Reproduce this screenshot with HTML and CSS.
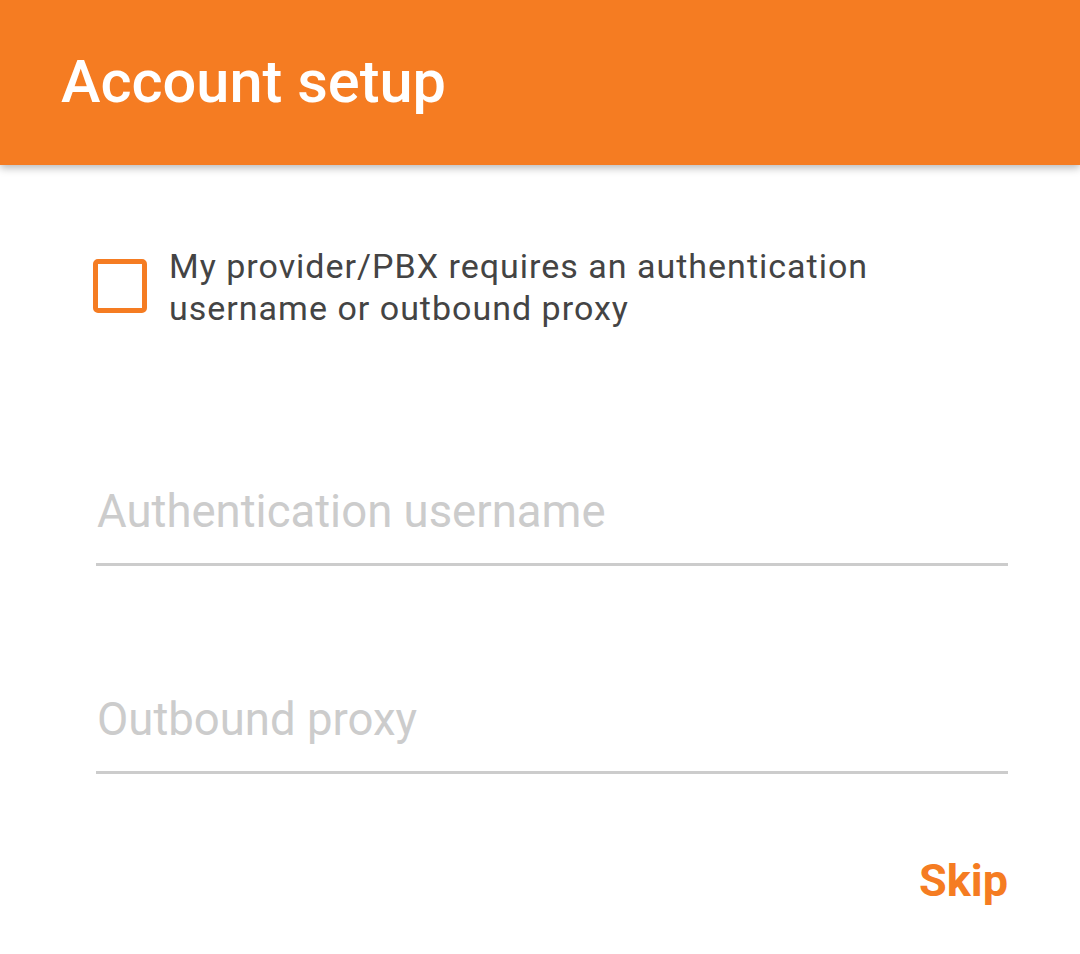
FILE: index.html
```html
<!DOCTYPE html>
<html>
<head>
<meta charset="utf-8">
<link rel="stylesheet" href="styles.css">
</head>
<body>
<header class="appbar"><h1 class="title">Account setup</h1></header>
<main class="content">
  <label class="check-row">
    <span class="checkbox"></span>
    <span class="check-label">My provider/PBX requires an authentication username or outbound proxy</span>
  </label>
  <div class="field field-first"><span class="placeholder">Authentication username</span></div>
  <div class="field field-second"><span class="placeholder">Outbound proxy</span></div>
  <div class="actions"><span class="skip">Skip</span></div>
</main>
</body>
</html>
```
FILE: styles.css
```css
html, body {
  margin: 0;
  padding: 0;
  background: #ffffff;
  font-family: Roboto, "Noto Sans", sans-serif;
}
body {
  width: 1080px;
  height: 954px;
  overflow: hidden;
}
.appbar {
  height: 165px;
  background: #f57c22;
  box-shadow: 0 3px 8px rgba(0,0,0,0.28);
  display: flex;
  align-items: center;
  padding-left: 61px;
  position: relative;
  z-index: 1;
}
.title {
  margin: 0;
  color: #ffffff;
  font-size: 59.5px;
  font-weight: 500;
  line-height: 1;
}
.content {
  padding: 0 72px 0 96px;
  display: flex;
  flex-direction: column;
}
.check-row {
  display: flex;
  align-items: flex-start;
  padding-top: 81px;
  margin-left: -3px;
}
.checkbox {
  flex: none;
  width: 44px;
  height: 44px;
  border: 5px solid #f57c22;
  border-radius: 5px;
  margin-top: 13px;
}
.check-label {
  margin-left: 22px;
  max-width: 720px;
  font-size: 34px;
  letter-spacing: 1px;
  line-height: 42px;
  color: #444444;
  margin-top: -1px;
}
.field {
  border-bottom: 3px solid #cccccc;
  height: 70px;
  display: flex;
  align-items: flex-end;
  padding-bottom: 29px;
  box-sizing: content-box;
}
.field-first { margin-top: 135px; }
.field-second { margin-top: 106px; }
.placeholder {
  font-size: 45.5px;
  line-height: 1;
  color: #cccccc;
  padding-left: 1px;
}
.actions {
  display: flex;
  justify-content: flex-end;
  margin-top: 84px;
}
.skip {
  color: #f57c22;
  font-weight: 700;
  font-size: 45px;
  line-height: 1;
}
```
